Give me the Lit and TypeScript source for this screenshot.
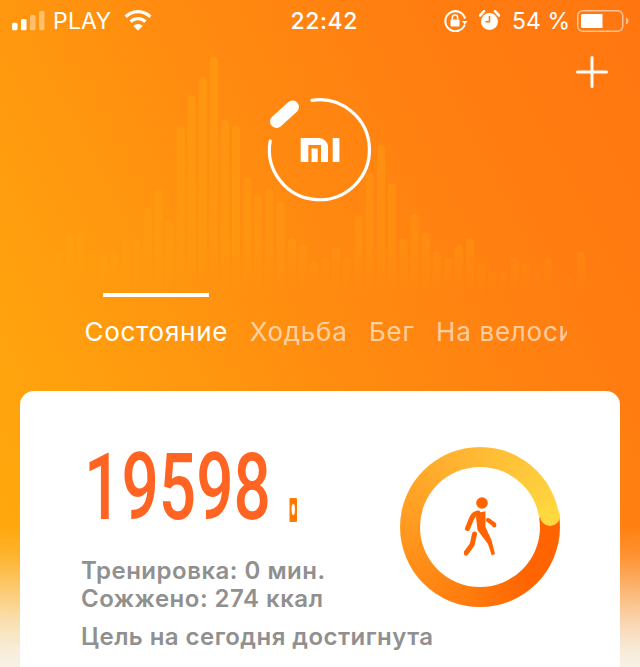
import { LitElement, html, css, svg } from "lit";
import { customElement } from "lit/decorators.js";

// [x centre, top y] of each faint background bar
const BARS: [number, number][] = [
  [58,253],[69.5,233],[80.7,233],[92.7,253],[103.7,253],[114.7,253],[125.7,239],[136.7,239],[147.7,208],[158.7,189],
  [169.7,220],[180.7,127],[191.7,95],[202.7,77],[213.7,57],[225,120],[236,126],[247.3,177],[258,195],[269,189],
  [280.7,202],[291.7,238],[303,245],[314,262],[325,258],[336,247],[347,258],[358.7,216],[369.7,173],[381,145],
  [392,183],[403.7,239],[414.7,214],[425.7,233],[437,252],[448,258],[458.7,245],[470,239],[481,264],[492,271],
  [503,271],[514.7,258],[525.7,264],[536.7,271],[548,258],[559,280],[570,277],[581,252],
];

@customElement("app-root")
export class AppRoot extends LitElement {
  static styles = css`
    :host { display: block; width: 640px; height: 667px; overflow: hidden; font-family: Inter, "Liberation Sans", sans-serif; }
    .page {
      position: relative; width: 640px; height: 667px; overflow: hidden;
      background:
        linear-gradient(to bottom, rgba(247,243,234,0) 525px, rgba(247,243,234,.15) 555px, rgba(247,243,234,.37) 580px, rgba(247,243,234,.72) 620px, rgba(247,243,234,.92) 650px, rgba(247,243,234,.98) 667px),
        linear-gradient(63deg, #ffac0c 0%, #ff9e0e 25%, #ff8c10 50%, #ff7d10 78%, #ff7610 100%);
      display: flex; flex-direction: column;
    }
    .bars { position: absolute; left: 0; top: 0; width: 640px; height: 320px; }
    .status {
      position: relative; height: 40px; flex: none; display: flex; align-items: center; color: #fff;
      font-size: 23px; padding: 1px 10px 0 12px; box-sizing: border-box;
    }
    .status > * { flex: none; }
    .carrier { margin-left: 7px; letter-spacing: .2px; }
    .wifi { margin-left: 13px; }
    .time { position: absolute; left: 290.5px; font-weight: 500; letter-spacing: .6px; }
    .right { margin-left: auto; display: flex; align-items: center; }
    .pct { margin: 0 7px 0 12px; }
    .alarm { margin-left: 11px; }
    .plus { position: absolute; left: 576px; top: 56px; }
    .logo { position: relative; display: block; height: 250px; flex: none; }
    .tabs {
      position: relative; flex: none; margin: 12px 0 0 84.5px; width: 482.5px; height: 46px; overflow: hidden;
      display: flex; gap: 21.5px; font-size: 26px; letter-spacing: .74px; color: rgba(255,255,255,.62);
      white-space: nowrap; line-height: 40px; padding-top: 14px; box-sizing: border-box; align-items: center;
    }
    .tab.on { color: #fff; }
    .line { position: absolute; left: 103px; top: 293px; width: 106px; height: 4px; background: #fff; }
    .card {
      position: relative; flex: none; margin: 43px 20px 0; height: 330px; background: #fff;
      border-radius: 14px 14px 0 0; display: flex; justify-content: space-between; padding: 49px 60px 0 61px; box-sizing: border-box;
    }
    .stat { display: flex; flex-direction: column; width: 310px; flex: none; }
    .count { display: flex; align-items: flex-end; height: 95px; }
    .num {
      font-family: Roboto, sans-serif; font-weight: 500; font-size: 92px; line-height: 95px; color: #ff6422;
      display: block; width: 205px; transform: scaleX(.715); transform-origin: left center; flex: none; margin-left: 3px;
    }
    .band { margin: 0 0 13px 0; flex: none; }
    .info { color: #909090; font-size: 24px; font-weight: 600; letter-spacing: .5px; line-height: 28px; margin-top: 22px; white-space: nowrap; }
    .goal { color: #909090; font-size: 24px; font-weight: 600; letter-spacing: .45px; line-height: 28px; margin-top: 10px; white-space: nowrap; }
    .ring {
      position: relative; flex: none; width: 160px; height: 160px; border-radius: 50%; margin-top: 7px;
      background: conic-gradient(from 81deg, #ff6400 0deg, #ff6400 55deg, #ff7a0c 105deg, #ff9a20 190deg, #ffb030 250deg, #ffc83a 320deg, #ffd83f 360deg);
      display: grid; place-items: center;
    }
    .hole { width: 120px; height: 120px; border-radius: 50%; background: #fff; display: grid; place-items: center; }
    .cap { position: absolute; left: 139.5px; top: 59.3px; width: 20px; height: 20px; border-radius: 50%; background: #ffd83f; }
  `;

  render() {
    return html`
      <div class="page">
        <svg class="bars" viewBox="0 0 640 320" aria-hidden="true">
          <defs>
            <linearGradient id="bf" gradientUnits="userSpaceOnUse" x1="0" y1="50" x2="0" y2="296">
              <stop offset="0" stop-color="#ffa810" stop-opacity=".42"/>
              <stop offset=".8" stop-color="#ffa810" stop-opacity=".24"/>
              <stop offset="1" stop-color="#ffa810" stop-opacity="0"/>
            </linearGradient>
          </defs>
          ${BARS.map(([x, y]) => svg`<rect x=${x - 4} y=${y} width="8" height=${296 - y} rx="4" fill="url(#bf)"/>`)}
        </svg>

        <div class="status">
          <svg width="34" height="20" viewBox="0 0 34 20">
            <rect x="0" y="11.700" width="5.500" height="7.600" rx="1.500" fill="#fff"/>
            <rect x="9" y="8" width="5.500" height="11.300" rx="1.500" fill="#fff"/>
            <rect x="18" y="4" width="5.500" height="15.300" rx="1.500" fill="#fff" fill-opacity=".4"/>
            <rect x="27" y="0" width="5.500" height="19.300" rx="1.500" fill="#fff" fill-opacity=".4"/>
          </svg>
          <span class="carrier">PLAY</span>
          <svg class="wifi" width="28" height="21" viewBox="0 0 28 21" fill="#fff">
            <path d="M14 0C8.800 0 4 2.100.5 5.500l2.300 2.400C5.700 5 9.600 3.300 14 3.300S22.300 5 25.200 7.900l2.300-2.400C24 2.100 19.200 0 14 0z"/>
            <path d="M14 7c-3.300 0-6.300 1.300-8.500 3.500l2.400 2.400C9.500 11.300 11.600 10.300 14 10.300s4.500 1 6.100 2.600l2.400-2.400C20.300 8.300 17.300 7 14 7z"/>
            <path d="M14 14c-1.800 0-3.400.7-4.600 1.900L14 20.700l4.600-4.800C17.400 14.700 15.800 14 14 14z"/>
          </svg>
          <span class="time">22:42</span>
          <div class="right">
            <svg width="24" height="22" viewBox="0 0 24 22" fill="none" stroke="#fff">
              <path d="M21 8.500A10 10 0 1 0 20.800 14.500" stroke-width="2"/>
              <path d="M17.800 11h6l-3 3.500z" fill="#fff" stroke="none"/>
              <rect x="6.500" y="9.500" width="9" height="7" rx="1" fill="#fff" stroke="none"/>
              <path d="M8.300 9.500V7.800a2.700 2.700 0 0 1 5.400 0v1.700" stroke-width="1.500"/>
            </svg>
            <svg class="alarm" width="21" height="21" viewBox="0 0 21 21">
              <circle cx="10.500" cy="11.500" r="8.500" fill="#fff"/>
              <path d="M10.500 6v5.800H6.500" fill="none" stroke="#ff7d10" stroke-width="1.600"/>
              <path d="M1 5.500L5 1.200M20 5.500L16 1.200" stroke="#fff" stroke-width="2.600" stroke-linecap="round"/>
            </svg>
            <span class="pct">54 %</span>
            <svg width="53" height="22" viewBox="0 0 53 22">
              <rect x=".75" y=".75" width="45" height="20.500" rx="5" fill="none" stroke="#fff" stroke-opacity=".55" stroke-width="1.500"/>
              <path d="M4 5.500a1.500 1.500 0 0 1 1.500-1.500H25.500V18H5.500A1.500 1.500 0 0 1 4 16.500z" fill="#fff"/>
              <path d="M49 7.500c1.500.3 2.500 1.800 2.500 3.500s-1 3.200-2.500 3.500z" fill="#fff" fill-opacity=".55"/>
            </svg>
          </div>
        </div>

        <svg class="plus" width="32" height="32" viewBox="0 0 32 32" stroke="#fff" stroke-width="3" stroke-linecap="round">
          <path d="M16 1.500v29M1.500 16h29"/>
        </svg>

        <svg class="logo" width="640" height="250" viewBox="0 40 640 250">
          <path d="M312 100.300A50 50 0 1 1 270.200 141" fill="none" stroke="#fff" stroke-width="3.200" stroke-linecap="round"/>
          <path d="M276.500 121.500L292.500 107" fill="none" stroke="#fff" stroke-width="13" stroke-linecap="round"/>
          <path fill-rule="evenodd" fill="#fff" d="M300.700 138H319a9 9 0 0 1 9 9V162H321V145H308.300V162H300.700zM311.500 148.500H317.700V162H311.500zM332.700 138h6.700v24h-6.700z"/>
        </svg>

        <div class="line"></div>
        <div class="tabs">
          <span class="tab on">Состояние</span>
          <span class="tab">Ходьба</span>
          <span class="tab">Бег</span>
          <span class="tab">На велосипеде</span>
        </div>

        <div class="card">
          <div class="stat">
            <div class="count">
              <span class="num">19598</span>
              <svg class="band" width="9" height="24" viewBox="0 0 9 24">
                <path fill-rule="evenodd" fill="#ff7a00" d="M1.500 0h5.500a1 1 0 0 1 1 1v22a1 1 0 0 1-1 1H1.500a1 1 0 0 1-1-1V1a1 1 0 0 1 1-1zM4.250 6a1.700 5.500 0 0 0-1.700 5.500a1.700 5.500 0 0 0 3.400 0a1.700 5.500 0 0 0-1.700-5.500z"/>
              </svg>
            </div>
            <div class="info">Тренировка: 0 мин.<br />Сожжено: 274 ккал</div>
            <div class="goal">Цель на сегодня достигнута</div>
          </div>
          <div class="ring">
            <div class="hole">
              <svg width="33" height="60" viewBox="0 0 33 60" fill="none" stroke="#ff6400" stroke-linecap="round" stroke-linejoin="round">
                <circle cx="18" cy="6" r="5.800" fill="#ff6400" stroke="none"/>
                <path d="M3.500 31.500L7.800 21C8.800 18.500 11 16.700 14 16" stroke-width="5"/>
                <path d="M12 20L15 15.500L21.500 14.300V30L27.500 43L31 57L27.800 58.500L24 47L13.500 33z" fill="#ff6400" stroke="none"/>
                <path d="M10.500 37L8.200 47.500L2 56" stroke-width="5"/>
                <path d="M24 23L30.200 27.500V28.500" stroke-width="4.200"/>
              </svg>
            </div>
            <div class="cap"></div>
          </div>
        </div>
      </div>
    `;
  }
}
